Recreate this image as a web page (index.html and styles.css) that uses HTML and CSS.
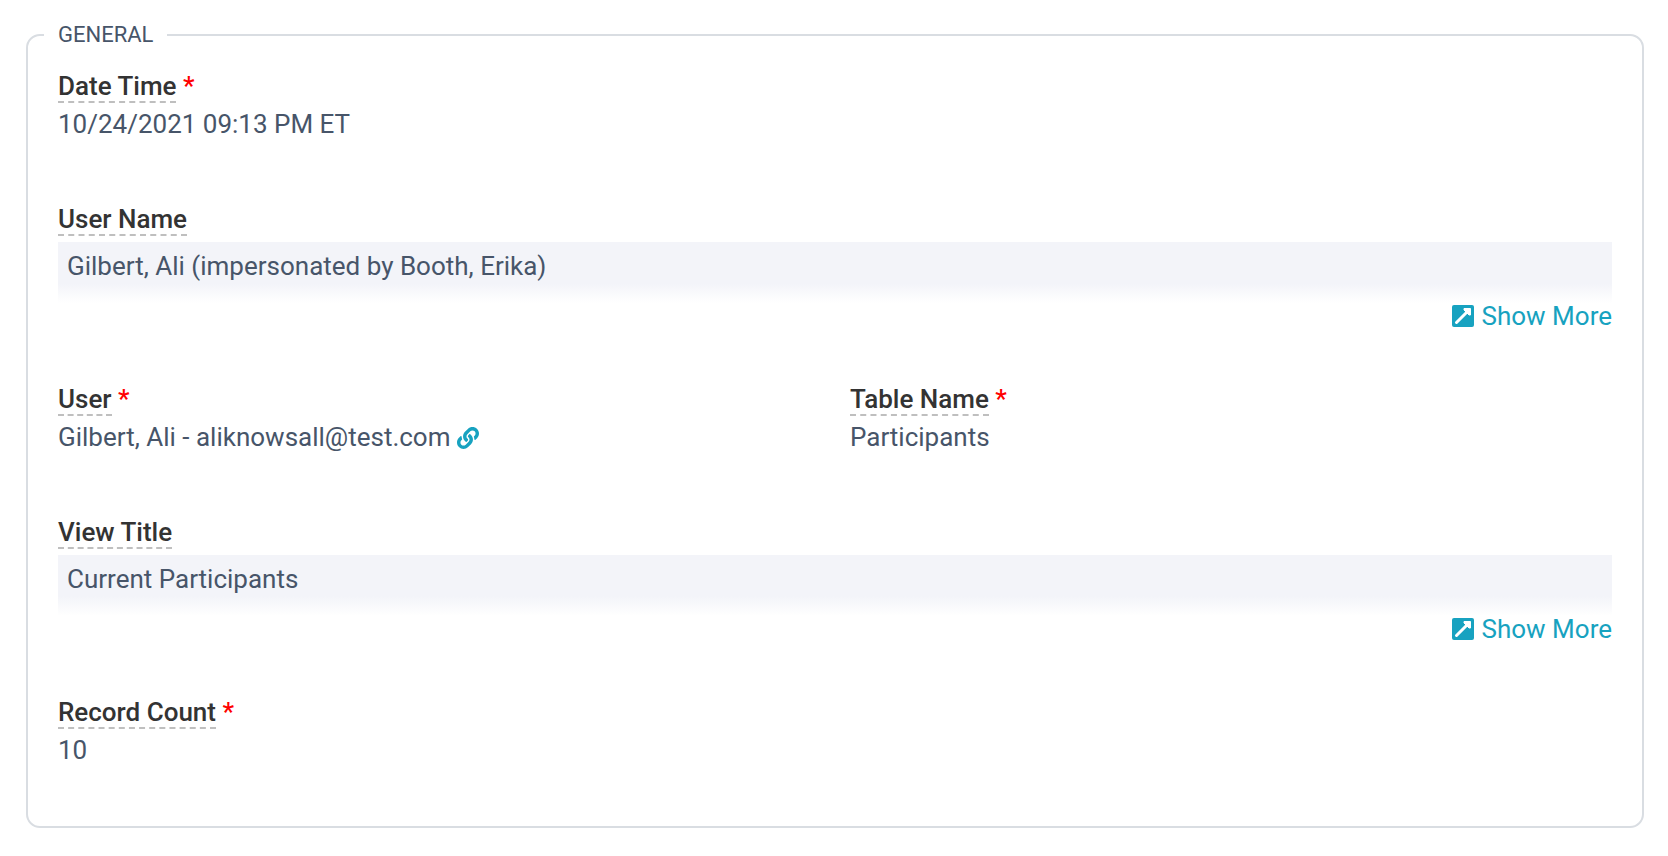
FILE: index.html
```html
<!DOCTYPE html>
<html lang="en">
  <head>
    <meta charset="UTF-8" />
    <meta name="viewport" content="width=device-width, initial-scale=1.0" />
    <title>General</title>
    <link rel="stylesheet" href="styles.css">
  </head>
  <body>
    <fieldset class="section">
      <legend class="section_title">GENERAL</legend>

      <div class="field">
        <div class="field_label"><span class="label_text">Date Time</span> <span class="required">*</span></div>
        <div class="field_value">10/24/2021 09:13 PM ET</div>
      </div>

      <div class="field field_long">
        <div class="field_label"><span class="label_text">User Name</span></div>
        <div class="preview">Gilbert, Ali (impersonated by Booth, Erika)</div>
        <a href="#" class="show_more">
          <svg class="icon" viewBox="0 0 22 22" aria-hidden="true">
            <rect width="22" height="22" rx="2" fill="currentColor" />
            <path d="M4.5 17.5L15 7" stroke="#fff" stroke-width="3" stroke-linecap="round" />
            <path d="M12 3.5H18.5V10L17 10L12 5Z" fill="#fff" stroke="#fff" stroke-linejoin="round" />
          </svg>
          Show More
        </a>
      </div>

      <div class="row">
        <div class="field">
          <div class="field_label"><span class="label_text">User</span> <span class="required">*</span></div>
          <div class="field_value">
            Gilbert, Ali - aliknowsall@test.com
            <a href="#" class="record_link" aria-label="Open user">
              <svg class="icon" viewBox="0 0 512 512" aria-hidden="true">
                <path fill="currentColor" d="M326.612 185.391c59.747 59.809 58.927 155.698.36 214.59-.11.12-.24.25-.36.37l-67.2 67.2c-59.27 59.27-155.699 59.262-214.96 0-59.27-59.26-59.27-155.7 0-214.96l37.106-37.106c9.84-9.84 26.786-3.3 27.294 10.606.648 17.722 3.826 35.527 9.69 52.721 1.986 5.822.567 12.262-3.783 16.612l-13.087 13.087c-28.026 28.026-28.905 73.66-1.155 101.96 28.024 28.579 74.086 28.749 102.325.51l67.2-67.19c28.191-28.191 28.073-73.757 0-101.83-3.701-3.694-7.429-6.564-10.341-8.569a16.037 16.037 0 0 1-6.947-12.606c-.396-10.567 3.348-21.456 11.698-29.806l21.054-21.055c5.521-5.521 14.182-6.199 20.584-1.731a152.482 152.482 0 0 1 20.522 17.197zM467.547 44.449c-59.261-59.262-155.69-59.27-214.96 0l-67.2 67.2c-.12.12-.25.25-.36.37-58.566 58.892-59.387 154.781.36 214.59a152.454 152.454 0 0 0 20.521 17.196c6.402 4.468 15.064 3.789 20.584-1.731l21.054-21.055c8.35-8.35 12.094-19.239 11.698-29.806a16.037 16.037 0 0 0-6.947-12.606c-2.912-2.005-6.64-4.875-10.341-8.569-28.073-28.073-28.191-73.639 0-101.83l67.2-67.19c28.239-28.239 74.3-28.069 102.325.51 27.75 28.3 26.872 73.934-1.155 101.96l-13.087 13.087c-4.35 4.35-5.769 10.79-3.783 16.612 5.864 17.194 9.042 34.999 9.69 52.721.509 13.906 17.454 20.446 27.294 10.606l37.106-37.106c59.271-59.259 59.271-155.699.001-214.959z" />
              </svg>
            </a>
          </div>
        </div>
        <div class="field">
          <div class="field_label"><span class="label_text">Table Name</span> <span class="required">*</span></div>
          <div class="field_value">Participants</div>
        </div>
      </div>

      <div class="field field_long">
        <div class="field_label"><span class="label_text">View Title</span></div>
        <div class="preview">Current Participants</div>
        <a href="#" class="show_more">
          <svg class="icon" viewBox="0 0 22 22" aria-hidden="true">
            <rect width="22" height="22" rx="2" fill="currentColor" />
            <path d="M4.5 17.5L15 7" stroke="#fff" stroke-width="3" stroke-linecap="round" />
            <path d="M12 3.5H18.5V10L17 10L12 5Z" fill="#fff" stroke="#fff" stroke-linejoin="round" />
          </svg>
          Show More
        </a>
      </div>

      <div class="field">
        <div class="field_label"><span class="label_text">Record Count</span> <span class="required">*</span></div>
        <div class="field_value">10</div>
      </div>
    </fieldset>
  </body>
</html>
```
FILE: styles.css
```css
body {
  margin: 22px 24px 28px 26px;
  background-color: #fff;
  color: #475569;
  font-family: Roboto, Arial, sans-serif;
  font-size: 26px;
  line-height: 38px;
}

.section {
  margin: 0;
  padding: 19px 30px 0;
  border: 2px solid #d9dde2;
  border-radius: 14px;
  min-width: 0;
}

.section_title {
  margin-left: -14px;
  padding: 0 14px;
  font-size: 22px;
  line-height: 26px;
}

.row {
  display: grid;
  grid-template-columns: 1fr 1fr;
  column-gap: 30px;
}

.field {
  padding-bottom: 57px;
}

.field_long {
  padding-bottom: 51px;
}

.field_label {
  color: #333;
  font-weight: 500;
}

.label_text {
  border-bottom: 2px dashed #bfbfbf;
}

.required {
  color: #f00;
}

.preview {
  margin-top: 4px;
  padding: 5px 9px 18px;
  background: linear-gradient(to bottom, #f3f4f9 68%, #fff);
}

.show_more {
  display: flex;
  justify-content: flex-end;
  align-items: center;
  gap: 8px;
  line-height: 26px;
}

.show_more,
.record_link {
  color: #17a2c0;
  text-decoration: none;
}

.icon {
  width: 22px;
  height: 22px;
}

.record_link .icon {
  vertical-align: -3px;
}
```
